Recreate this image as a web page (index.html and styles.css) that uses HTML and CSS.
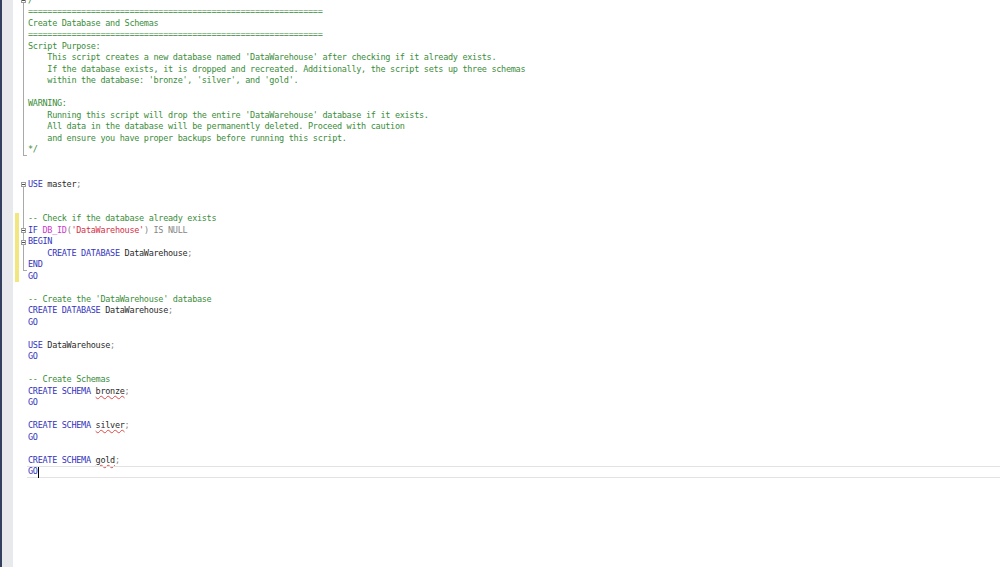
FILE: index.html
```html
<!DOCTYPE html>
<html>
<head>
<meta charset="utf-8">
<link rel="stylesheet" href="styles.css">
</head>
<body>
<div class="window">
  <div class="sidebar"></div>
  <div class="editor">
    <div class="lines">
      <div class="ln"><span class="cb"></span><span class="ol box down"></span><span class="code cm">/*</span></div>
      <div class="ln"><span class="cb"></span><span class="ol line"></span><span class="code cm">=============================================================</span></div>
      <div class="ln"><span class="cb"></span><span class="ol line"></span><span class="code cm">Create Database and Schemas</span></div>
      <div class="ln"><span class="cb"></span><span class="ol line"></span><span class="code cm">=============================================================</span></div>
      <div class="ln"><span class="cb"></span><span class="ol line"></span><span class="code cm">Script Purpose:</span></div>
      <div class="ln"><span class="cb"></span><span class="ol line"></span><span class="code cm">    This script creates a new database named 'DataWarehouse' after checking if it already exists.</span></div>
      <div class="ln"><span class="cb"></span><span class="ol line"></span><span class="code cm">    If the database exists, it is dropped and recreated. Additionally, the script sets up three schemas</span></div>
      <div class="ln"><span class="cb"></span><span class="ol line"></span><span class="code cm">    within the database: 'bronze', 'silver', and 'gold'.</span></div>
      <div class="ln"><span class="cb"></span><span class="ol line"></span><span class="code cm"></span></div>
      <div class="ln"><span class="cb"></span><span class="ol line"></span><span class="code cm">WARNING:</span></div>
      <div class="ln"><span class="cb"></span><span class="ol line"></span><span class="code cm">    Running this script will drop the entire 'DataWarehouse' database if it exists.</span></div>
      <div class="ln"><span class="cb"></span><span class="ol line"></span><span class="code cm">    All data in the database will be permanently deleted. Proceed with caution</span></div>
      <div class="ln"><span class="cb"></span><span class="ol line"></span><span class="code cm">    and ensure you have proper backups before running this script.</span></div>
      <div class="ln"><span class="cb"></span><span class="ol end"></span><span class="code cm">*/</span></div>
      <div class="ln"><span class="cb"></span><span class="ol"></span><span class="code"></span></div>
      <div class="ln"><span class="cb"></span><span class="ol"></span><span class="code"></span></div>
      <div class="ln"><span class="cb"></span><span class="ol box down"></span><span class="code"><span class="kw">USE</span> master<span class="op">;</span></span></div>
      <div class="ln"><span class="cb"></span><span class="ol line"></span><span class="code"></span></div>
      <div class="ln"><span class="cb"></span><span class="ol line"></span><span class="code"></span></div>
      <div class="ln"><span class="cb on"></span><span class="ol line"></span><span class="code cm">-- Check if the database already exists</span></div>
      <div class="ln"><span class="cb on"></span><span class="ol box up down"></span><span class="code"><span class="kw">IF</span> <span class="fn">DB_ID</span><span class="op">(</span><span class="str">'DataWarehouse'</span><span class="op">) IS NULL</span></span></div>
      <div class="ln"><span class="cb on"></span><span class="ol box up down"></span><span class="code"><span class="kw">BEGIN</span></span></div>
      <div class="ln"><span class="cb on"></span><span class="ol line"></span><span class="code">    <span class="kw">CREATE DATABASE</span> DataWarehouse<span class="op">;</span></span></div>
      <div class="ln"><span class="cb on"></span><span class="ol end"></span><span class="code"><span class="kw">END</span></span></div>
      <div class="ln"><span class="cb on"></span><span class="ol"></span><span class="code"><span class="kw">GO</span></span></div>
      <div class="ln"><span class="cb"></span><span class="ol"></span><span class="code"></span></div>
      <div class="ln"><span class="cb"></span><span class="ol"></span><span class="code cm">-- Create the 'DataWarehouse' database</span></div>
      <div class="ln"><span class="cb"></span><span class="ol"></span><span class="code"><span class="kw">CREATE DATABASE</span> DataWarehouse<span class="op">;</span></span></div>
      <div class="ln"><span class="cb"></span><span class="ol"></span><span class="code"><span class="kw">GO</span></span></div>
      <div class="ln"><span class="cb"></span><span class="ol"></span><span class="code"></span></div>
      <div class="ln"><span class="cb"></span><span class="ol"></span><span class="code"><span class="kw">USE</span> DataWarehouse<span class="op">;</span></span></div>
      <div class="ln"><span class="cb"></span><span class="ol"></span><span class="code"><span class="kw">GO</span></span></div>
      <div class="ln"><span class="cb"></span><span class="ol"></span><span class="code"></span></div>
      <div class="ln"><span class="cb"></span><span class="ol"></span><span class="code cm">-- Create Schemas</span></div>
      <div class="ln"><span class="cb"></span><span class="ol"></span><span class="code"><span class="kw">CREATE SCHEMA</span> <span class="sq">bronze</span><span class="op">;</span></span></div>
      <div class="ln"><span class="cb"></span><span class="ol"></span><span class="code"><span class="kw">GO</span></span></div>
      <div class="ln"><span class="cb"></span><span class="ol"></span><span class="code"></span></div>
      <div class="ln"><span class="cb"></span><span class="ol"></span><span class="code"><span class="kw">CREATE SCHEMA</span> <span class="sq">silver</span><span class="op">;</span></span></div>
      <div class="ln"><span class="cb"></span><span class="ol"></span><span class="code"><span class="kw">GO</span></span></div>
      <div class="ln"><span class="cb"></span><span class="ol"></span><span class="code"></span></div>
      <div class="ln"><span class="cb"></span><span class="ol"></span><span class="code"><span class="kw">CREATE SCHEMA</span> <span class="sq">gold</span><span class="op">;</span></span></div>
      <div class="ln"><span class="cb"></span><span class="ol"></span><span class="code current"><span class="kw">GO</span><span class="caret"></span></span></div>
    </div>
  </div>
</div>
</body>
</html>
```

FILE: styles.css
```css
html, body {
  margin: 0;
  padding: 0;
  background: #ffffff;
}

.window {
  display: flex;
  width: 1000px;
  height: 567px;
  overflow: hidden;
}

.sidebar {
  width: 11px;
  flex: none;
  border-left: 2px solid #34415e;
  background: #e8e9ec;
}

.editor {
  flex: 1;
  background: #ffffff;
  overflow: hidden;
}

.lines {
  margin-top: -5.25px;
}

.ln {
  display: grid;
  grid-template-columns: 2px 4px 1px 7px 1px 1fr;
  height: 11.5px;
  font-family: "DejaVu Sans Mono", "Liberation Mono", monospace;
  font-size: 8.5px;
  letter-spacing: -0.29px;
  line-height: 11.5px;
  color: #2a2a2a;
}

.cb {
  grid-column: 2;
}
.cb.on {
  background: #f2e77e;
}

.ol {
  grid-column: 4;
  display: flex;
  align-items: center;
  justify-content: center;
}

.ol.line {
  background: linear-gradient(#a9a9a9, #a9a9a9) no-repeat 3px 0 / 1px 100%;
}

.ol.end {
  background:
    linear-gradient(#a9a9a9, #a9a9a9) no-repeat 3px 0 / 1px 100%,
    linear-gradient(#a9a9a9, #a9a9a9) no-repeat 3px 100% / 4px 1px;
}

.ol.box.down {
  background: linear-gradient(#a9a9a9, #a9a9a9) no-repeat 3px 100% / 1px 50%;
}
.ol.box.up.down {
  background: linear-gradient(#a9a9a9, #a9a9a9) no-repeat 3px 0 / 1px 100%;
}

.ol.box::before {
  content: "";
  width: 5px;
  height: 5px;
  box-sizing: border-box;
  border: 1px solid #9c9c9c;
  background:
    linear-gradient(#505050, #505050) no-repeat center / 3px 1px,
    #ffffff;
}

.code {
  grid-column: 6;
  white-space: pre;
}

.cm { color: #3a8d3a; }
.kw { color: #3434bd; }
.op { color: #858585; }
.str { color: #d43048; }
.fn { color: #cc3acc; }

.sq {
  text-decoration: underline wavy #e04848;
  text-decoration-thickness: 1px;
  text-underline-offset: 1px;
}

.current {
  margin-left: -1px;
  padding-left: 1px;
  box-shadow: inset 0 1px 0 #e2e2e2, inset 0 -1px 0 #e2e2e2;
}

.caret {
  display: inline-block;
  width: 0;
  height: 11px;
  vertical-align: top;
  border-left: 1px solid #000000;
  margin-top: 0.25px;
}
```
